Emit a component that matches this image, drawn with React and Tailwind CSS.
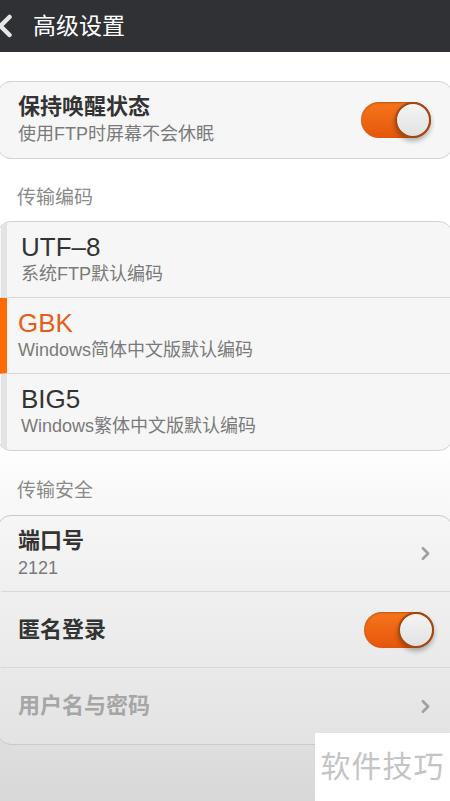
import { ChevronLeft, ChevronRight } from 'lucide-react';

// 高级设置 page: FTP server advanced settings, MIUI style.

const font = { fontFamily: '"Liberation Sans", "Noto Sans CJK SC", sans-serif' };

function Toggle() {
  return (
    <div className="relative w-[70px] h-[36px] rounded-full bg-gradient-to-b from-[#f7751c] to-[#e4560a] shadow-[inset_0_1px_2px_rgba(0,0,0,0.25)]">
      <div className="absolute right-0 top-0 w-[36px] h-[36px] rounded-full border-[2px] border-[#a2470f] bg-gradient-to-b from-[#f4f4f4] to-[#e2e2e2] shadow-[0_3px_5px_rgba(0,0,0,0.3)]" />
    </div>
  );
}

function Row({ title, sub, titleClass = 'text-[#333] font-bold text-[22px]', right, stripe, last }) {
  return (
    <div
      className={`flex items-center h-[76px] pl-[17px] pr-[18px] ${last ? '' : 'border-b border-[#d9d9d9]'} ${stripe || ''}`}
    >
      <div className="flex-1 flex flex-col">
        <span className={`leading-[28px] ${titleClass}`}>{title}</span>
        {sub && <span className="text-[18px] leading-[26px] text-[#7a7a7a]">{sub}</span>}
      </div>
      {right}
    </div>
  );
}

const chevron = <ChevronRight size={21} strokeWidth={3} className="text-[#a0a0a0] translate-x-[2px]" />;

export default function App() {
  return (
    <div className="relative min-h-[801px] flex flex-col bg-gradient-to-b from-white via-white via-55% to-[#d8d8d8]" style={font}>
      {/* Title bar */}
      <div className="h-[52px] flex items-center bg-[#303135] text-white">
        <ChevronLeft size={36} strokeWidth={3} className="-ml-[13px] text-[#e6e6e6]" />
        <span className="ml-[10px] text-[23px] leading-none">高级设置</span>
      </div>

      <div className="pt-[29px] -mx-[3px]">
        <div className="rounded-[14px] border border-[#d3d3d3] bg-[#f6f6f6] overflow-hidden">
          <div className="flex items-center h-[76px] pl-[20px] pr-[21px]">
            <div className="flex-1 flex flex-col">
              <span className="text-[22px] leading-[28px] font-bold text-[#333]">保持唤醒状态</span>
              <span className="text-[18px] leading-[26px] text-[#7a7a7a]">使用FTP时屏幕不会休眠</span>
            </div>
            <Toggle />
          </div>
        </div>

        <div className="pl-[20px] pt-[26px] pb-[10px] text-[19px] leading-[26px] text-[#8a8a8a]">传输编码</div>

        <div className="rounded-[14px] border border-[#d3d3d3] bg-[#f6f6f6] overflow-hidden">
          <div className="pl-[3px]">
            <Row
              title="UTF‒8"
              sub="系统FTP默认编码"
              titleClass="text-[26px] text-[#333]"
              stripe="border-l-[6px] border-l-[#e3e3e3] !pl-[14px]"
            />
          </div>
          <Row
            title="GBK"
            sub="Windows简体中文版默认编码"
            titleClass="text-[26px] text-[#e35e17]"
            stripe="border-l-[9px] border-l-[#ff6a00] !pl-[11px]"
          />
          <div className="pl-[3px]">
            <Row
              title="BIG5"
              sub="Windows繁体中文版默认编码"
              titleClass="text-[26px] text-[#333]"
              stripe="border-l-[6px] border-l-[#e3e3e3] !pl-[14px]"
              last
            />
          </div>
        </div>

        <div className="pl-[20px] pt-[27px] pb-[11px] text-[19px] leading-[26px] text-[#8a8a8a]">传输安全</div>

        <div className="rounded-[14px] border border-[#c9c9c9] bg-gradient-to-b from-[#f6f6f6] to-[#e3e3e3] overflow-hidden">
          <div className="pl-[3px]">
            <Row title="端口号" sub="2121" right={chevron} />
          </div>
          <div className="pl-[3px]">
            <Row title="匿名登录" right={<Toggle />} />
          </div>
          <div className="pl-[3px]">
            <Row title="用户名与密码" titleClass="text-[#a6a6a6] font-bold text-[22px]" right={chevron} last />
          </div>
        </div>
      </div>

      {/* Watermark overlay */}
      <div className="absolute right-0 bottom-0 w-[135px] h-[68px] bg-white flex items-start justify-center pt-[16px] text-[30px] leading-[36px] text-[#c4c4c4] tracking-[1px]">
        软件技巧
      </div>
    </div>
  );
}
